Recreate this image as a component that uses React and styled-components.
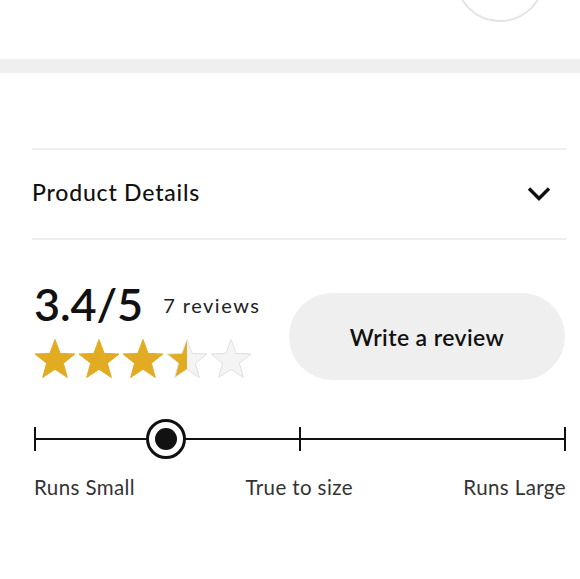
import styled, { createGlobalStyle } from "styled-components";

const GlobalStyle = createGlobalStyle`
  body {
    margin: 0;
    background: #fff;
    font-family: "Lato", "Liberation Sans", sans-serif;
    color: #111;
  }
`;

const Page = styled.div`
  width: 580px;
  height: 579px;
  overflow: hidden;
  background: #fff;
`;

const TopArea = styled.div`
  height: 59px;
  overflow: hidden;
  display: flex;
  justify-content: flex-end;
`;

const Avatar = styled.div`
  width: 86px;
  height: 86px;
  margin-top: -68px;
  margin-right: 35px;
  border-radius: 50%;
  border: 2px solid #e4e4e4;
  flex-shrink: 0;
`;

const Band = styled.div`
  height: 14px;
  background: #efefef;
`;

const Content = styled.div`
  margin: 75px 13px 0 32px;
`;

const Accordion = styled.div`
  box-sizing: border-box;
  height: 92px;
  border-top: 2px solid #eee;
  border-bottom: 2px solid #eee;
  display: flex;
  align-items: center;
  justify-content: space-between;
  padding: 0 15px 4px 0;
`;

const AccordionTitle = styled.span`
  font-size: 23px;
  font-weight: 500;
  letter-spacing: 0.8px;
  color: #111;
`;

const ChevronIcon = styled.svg`
  margin-top: 3px;
`;

const RatingRow = styled.div`
  display: flex;
  justify-content: space-between;
  align-items: flex-start;
  margin-top: 42px;
`;

const Summary = styled.div`
  padding-left: 2px;
`;

const ScoreLine = styled.div`
  display: flex;
  align-items: flex-start;
  gap: 20px;
`;

const Score = styled.span`
  font-size: 45px;
  font-weight: 600;
  letter-spacing: -0.1px;
  line-height: 45px;
  color: #111;
`;

const Count = styled.span`
  margin-top: 11px;
  font-size: 20px;
  line-height: 24px;
  letter-spacing: 1.5px;
  color: #222;
`;

const Stars = styled.div`
  display: flex;
  gap: 2px;
  margin-top: 12px;
`;

const WriteButton = styled.button`
  width: 276px;
  height: 87px;
  margin: 11px 2px 0 0;
  border: none;
  border-radius: 44px;
  background: #efefef;
  font-family: inherit;
  font-size: 23px;
  font-weight: 600;
  letter-spacing: 0.4px;
  color: #111;
  cursor: pointer;
`;

const Fit = styled.div`
  margin-top: 39px;
  padding: 0 1px 0 2px;
`;

const Track = styled.div`
  position: relative;
  height: 40px;
  display: flex;
  align-items: center;
  justify-content: space-between;
  &::before {
    content: "";
    position: absolute;
    left: 0;
    right: 0;
    top: 19px;
    height: 2px;
    background: #111;
  }
`;

const Tick = styled.span`
  width: 2px;
  height: 24px;
  background: #111;
  position: relative;
`;

const Knob = styled.span`
  position: absolute;
  top: 0;
  left: 112px;
  box-sizing: border-box;
  width: 40px;
  height: 40px;
  border: 3.5px solid #111;
  border-radius: 50%;
  background: #fff;
  display: flex;
  align-items: center;
  justify-content: center;
  &::after {
    content: "";
    width: 22px;
    height: 22px;
    border-radius: 50%;
    background: #111;
  }
`;

const Labels = styled.div`
  display: flex;
  justify-content: space-between;
  margin-top: 16px;
  font-size: 20.5px;
  letter-spacing: 0.4px;
  color: #333;
`;

const STAR =
  "M21 0.5L26.17 14.38L40.97 15.01L29.37 24.22L33.34 38.49L21 30.3L8.66 38.49L12.63 24.22L1.03 15.01L15.83 14.38Z";

const Star = ({ fill, id }) => (
  <svg width="42" height="40" viewBox="0 0 42 40">
    <defs>
      <linearGradient id={id}>
        <stop offset={fill} stopColor="#e2ac22" />
        <stop offset={fill} stopColor="#f4f4f4" />
      </linearGradient>
    </defs>
    <path
      d={STAR}
      fill={`url(#${id})`}
      stroke={fill >= 1 ? "#e2ac22" : "#e0e0e0"}
      strokeWidth="1"
      strokeLinejoin="round"
    />
  </svg>
);

const Chevron = () => (
  <ChevronIcon width="26" height="16" viewBox="0 0 26 16">
    <path d="M3 2.5l10 10 10-10" fill="none" stroke="#111" strokeWidth="3.4" />
  </ChevronIcon>
);

const rating = 3.4;

export default function App() {
  const fills = [0, 1, 2, 3, 4].map((i) => {
    const f = Math.max(0, Math.min(1, rating - i));
    return f > 0 && f < 1 ? 0.5 : f;
  });

  return (
    <Page>
      <GlobalStyle />
      <TopArea>
        <Avatar />
      </TopArea>
      <Band />
      <Content>
        <Accordion>
          <AccordionTitle>Product Details</AccordionTitle>
          <Chevron />
        </Accordion>
        <RatingRow>
          <Summary>
            <ScoreLine>
              <Score>3.4/5</Score>
              <Count>7 reviews</Count>
            </ScoreLine>
            <Stars>
              {fills.map((f, i) => (
                <Star key={i} fill={f} id={`star-${i}`} />
              ))}
            </Stars>
          </Summary>
          <WriteButton>Write a review</WriteButton>
        </RatingRow>
        <Fit>
          <Track>
            <Tick />
            <Tick />
            <Tick />
            <Knob />
          </Track>
          <Labels>
            <span>Runs Small</span>
            <span>True to size</span>
            <span>Runs Large</span>
          </Labels>
        </Fit>
      </Content>
    </Page>
  );
}
